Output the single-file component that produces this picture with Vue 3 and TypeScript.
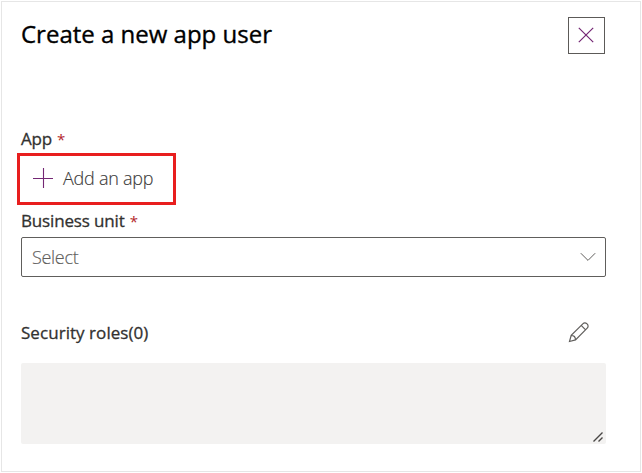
<script setup lang="ts">
import { ref } from 'vue'

const title = 'Create a new app user'
const roleCount = ref(0)
</script>

<template>
  <section class="panel">
    <header class="header">
      <h1 class="title">{{ title }}</h1>
      <button class="close" type="button" aria-label="Close">
        <svg width="16" height="16" viewBox="0 0 16 16"><path d="M.8.8l14.400 14.400M15.200.8L.8 15.200" /></svg>
      </button>
    </header>

    <div class="label app-label"><span class="app-text">App</span><span class="required">*</span></div>
    <button class="add" type="button">
      <svg width="20" height="20" viewBox="0 0 20 20"><path d="M10.500 0v20M0 10.500h20" /></svg>
      <span>Add an app</span>
    </button>

    <div class="label unit-label"><span class="unit-text">Business unit</span><span class="required">*</span></div>
    <button class="select" type="button">
      <span>Select</span>
      <svg width="16" height="10" viewBox="0 0 16 10"><path d="M.8 1.200L8 8.400l7.200-7.200" /></svg>
    </button>

    <div class="roles-row">
      <span class="label roles-label">Security roles({{ roleCount }})</span>
      <svg class="pencil" width="22" height="22" viewBox="0 0 22 22">
        <path d="M1.500 20.500L3.200 14.400 14.800 2.800C17.500.1 22 4.400 19.200 7.200L7.500 18.900ZM3.200 14.400C5.700 14.500 7.500 16.200 7.500 18.900M13.200 4.400l4.400 4.400" />
      </svg>
    </div>
    <div class="roles-box">
      <svg width="12" height="12" viewBox="0 0 12 12"><path d="M1.500 10.500l9-9M6.500 10.500l4-4" /></svg>
    </div>
  </section>
</template>

<style>
body {
  background: #fff;
}
</style>

<style scoped>
.panel {
  box-sizing: border-box;
  width: 640px;
  height: 471px;
  margin: 1px;
  padding: 15px 34px 0 19px;
  border: 1px solid #e6e6e6;
  display: flex;
  flex-direction: column;
  font-family: "Open Sans", "Noto Sans", sans-serif;
  color: #323130;
}
.header {
  display: flex;
  justify-content: space-between;
  height: 37px;
}
.title {
  margin: 0;
  font-size: 24px;
  line-height: 33px;
  font-weight: 400;
  -webkit-text-stroke: 0.35px #000;
  color: #000;
  white-space: nowrap;
}
button {
  box-sizing: border-box;
  margin: 0;
  font-family: inherit;
  background: transparent;
}
svg {
  display: block;
  fill: none;
}
.close {
  width: 37px;
  height: 37px;
  margin-right: 1px;
  padding: 0 2px 2px 0;
  border: 1px solid #5c5a58;
  display: flex;
  align-items: center;
  justify-content: center;
}
.close svg {
  stroke: #742774;
  stroke-width: 1.2;
}
.label {
  font-size: 17px;
  line-height: 24px;
  font-weight: 400;
  -webkit-text-stroke: 0.3px currentColor;
  white-space: nowrap;
}
.app-label {
  margin-top: 73px;
}
.app-text,
.unit-text {
  letter-spacing: -0.15px;
}
.roles-label {
  letter-spacing: 0.05px;
}
.required {
  margin-left: 5px;
  font-size: 15px;
  -webkit-text-stroke: 0;
  color: #b3262c;
}
.add {
  width: 159px;
  height: 52px;
  margin: 2px 0 0 -4px;
  padding: 0 0 3px 13px;
  border: 3px solid #e81e1e;
  display: flex;
  align-items: center;
  gap: 10px;
  font-size: 18px;
  color: #3b3a39;
  white-space: nowrap;
}
.add span {
  font-weight: 300;
  letter-spacing: -0.25px;
  -webkit-text-stroke: 0.15px currentColor;
}
.add svg {
  stroke: #742774;
  stroke-width: 1.1;
}
.unit-label {
  margin-top: 4px;
}
.select {
  height: 40px;
  margin-top: 4px;
  padding: 0 9px 0 10px;
  border: 1px solid #605e5c;
  border-radius: 2px;
  display: flex;
  align-items: center;
  justify-content: space-between;
  font-size: 18px;
  font-weight: 300;
  color: #605e5c;
}
.select span {
  letter-spacing: -0.3px;
  -webkit-text-stroke: 0.15px currentColor;
}
.select svg {
  stroke: #605e5c;
  stroke-width: 1;
}
.roles-row {
  height: 24px;
  margin-top: 43px;
  padding-right: 16px;
  display: flex;
  align-items: center;
  justify-content: space-between;
}
.roles-label {
  padding-top: 1px;
}
.pencil {
  stroke: #605e5c;
  stroke-width: 1.2;
}
.roles-box {
  height: 81px;
  margin-top: 19px;
  padding: 0 2px 1px 0;
  box-sizing: border-box;
  border-radius: 2px;
  background: #f3f2f1;
  display: flex;
  align-items: flex-end;
  justify-content: flex-end;
}
.roles-box svg {
  stroke: #484644;
  stroke-width: 1.4;
}
</style>
